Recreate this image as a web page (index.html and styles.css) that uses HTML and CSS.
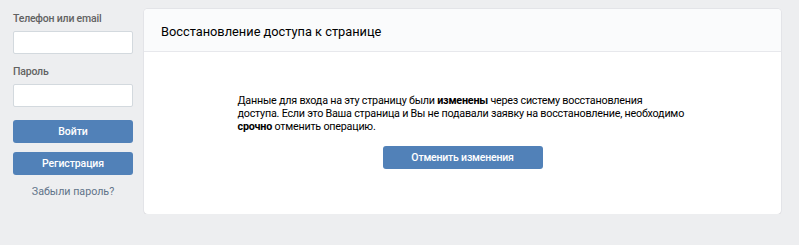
FILE: index.html
```html
<!DOCTYPE html>
<html lang="ru">
<head>
    <meta charset="UTF-8">
    <title>Восстановление доступа</title>
    <link rel="stylesheet" href="styles.css">
</head>
<body>
    <div class="page">
        <div class="side">
            <form class="login">
                <label for="login">Телефон или email</label>
                <input type="text" id="login">
                <label for="pass">Пароль</label>
                <input type="password" id="pass">
                <button type="button" class="btn">Войти</button>
                <button type="button" class="btn">Регистрация</button>
                <a class="forgot" href="#">Забыли пароль?</a>
            </form>
        </div>
        <div class="card">
            <div class="card-head">Восстановление доступа к странице</div>
            <div class="card-body">
                <p class="msg">Данные для входа на эту страницу были <b>изменены</b> через систему восстановления<br>
                доступа. Если это Ваша страница и Вы не подавали заявку на восстановление, необходимо<br>
                <b>срочно</b> отменить операцию.</p>
                <button type="button" class="btn btn-wide">Отменить изменения</button>
            </div>
        </div>
    </div>
</body>
</html>
```

FILE: styles.css
```css
body {
    margin: 0;
    background: #edeef0;
    font-family: Roboto, "Liberation Sans", Arial, sans-serif;
    font-size: 12px;
    color: #000;
}
.page {
    display: flex;
    align-items: flex-start;
    padding: 9px 18px 0 13px;
    gap: 11px;
}
.side {
    width: 120px;
    flex-shrink: 0;
}
.login {
    display: flex;
    flex-direction: column;
    padding-top: 3px;
}
.login label {
    font-size: 10.5px;
    letter-spacing: -0.2px;
    font-weight: 500;
    color: #626262;
    line-height: 14px;
    margin-bottom: 5px;
}
.login input {
    box-sizing: border-box;
    height: 23px;
    width: 120px;
    border: 1px solid #d3d9de;
    border-radius: 2px;
    background: #fff;
    margin: 0 0 11px;
}
.login input + .btn {
    margin-top: 2px;
}
.btn {
    box-sizing: border-box;
    height: 23px;
    width: 120px;
    border: none;
    border-radius: 3px;
    background: #5181b8;
    color: #fff;
    font-family: Roboto, "Liberation Sans", Arial, sans-serif;
    font-size: 10.5px;
    letter-spacing: -0.1px;
    font-weight: 500;
    margin: 0 0 9px;
    padding: 0;
}
.forgot {
    text-align: center;
    color: #5f7389;
    font-size: 10.7px;
    line-height: 14px;
    text-decoration: none;
    margin-top: 1px;
}
.card {
    flex: 1;
    background: #fff;
    border-radius: 4px;
    box-shadow: 0 1px 0 0 #d7d8db, 0 0 0 1px #e3e4e8;
    overflow: hidden;
}
.card-head {
    height: 43px;
    box-sizing: border-box;
    background: #fafbfc;
    border-bottom: 1px solid #e7e8ec;
    padding: 15px 17px 0;
    font-size: 12.8px;
    line-height: 15px;
    color: #000;
}
.card-body {
    height: 162px;
    display: flex;
    flex-direction: column;
    align-items: center;
}
.msg {
    width: 450px;
    margin: 42px 0 0;
    font-size: 10.75px;
    letter-spacing: -0.22px;
    line-height: 13px;
    white-space: nowrap;
}
.btn-wide {
    width: 160px;
    margin-top: 13px;
    letter-spacing: -0.2px;
}
```
